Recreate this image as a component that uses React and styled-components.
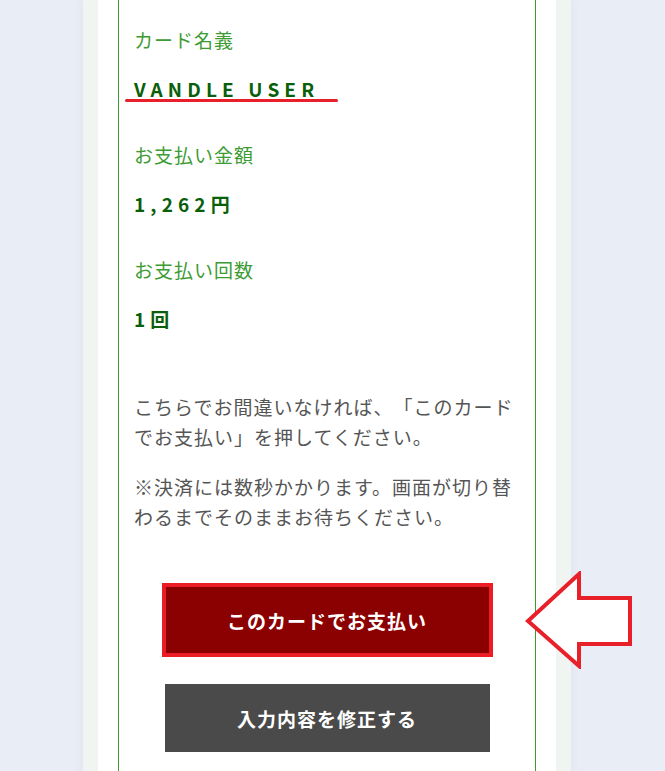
import styled, { createGlobalStyle } from 'styled-components';

const GlobalStyle = createGlobalStyle`
  html, body {
    margin: 0;
    padding: 0;
    background: #e9edf6;
    font-family: "Noto Sans CJK JP", "Noto Sans", sans-serif;
    text-spacing-trim: space-all;
  }
`;

const Page = styled.div`
  min-height: 100vh;
  padding-left: 83px;
`;

const Frame = styled.div`
  width: 458px;
  padding: 0 15px;
  background: #f1f5f1;
  box-shadow: 0 0 10px rgba(40, 50, 90, 0.06);
`;

const Sheet = styled.div`
  background: #fff;
  padding: 0 20px;
`;

const Confirm = styled.div`
  border-left: 1px solid #3a9a2e;
  border-right: 1px solid #3a9a2e;
  padding: 25px 15px 40px;
`;

const Label = styled.div`
  font-size: 19px;
  letter-spacing: 1px;
  line-height: 30px;
  color: #3d9b33;
  margin-top: ${(p) => (p.first ? '0' : '36px')};
`;

const Value = styled.div`
  position: relative;
  display: inline-block;
  margin-top: 19px;
  font-size: 19px;
  font-weight: 700;
  line-height: 30px;
  letter-spacing: 0.27em;
  color: #0a5f0a;
`;

// 赤線の注釈
const Mark = styled.span`
  position: absolute;
  left: -9px;
  top: 25px;
  width: 213px;
  height: 3px;
  border-radius: 2px;
  background: #e8202a;
`;

const Note = styled.p`
  margin: ${(p) => (p.first ? '58px' : '20px')} 0 0;
  font-size: 19px;
  letter-spacing: 1px;
  line-height: 30px;
  color: #555;
`;

const Actions = styled.div`
  display: flex;
  flex-direction: column;
  align-items: center;
  gap: 30px;
  margin-top: 54px;
`;

const ButtonWrap = styled.div`
  position: relative;
`;

const Button = styled.button`
  display: block;
  width: 325px;
  height: 68px;
  border: 0;
  padding: 0;
  font-family: inherit;
  font-size: 19px;
  font-weight: 700;
  letter-spacing: 1px;
  color: #fff;
  background: ${(p) => (p.primary ? '#8b0000' : '#4a4a4a')};
  outline: ${(p) => (p.primary ? '4px solid #ec1c24' : 'none')};
  outline-offset: -1px;
  cursor: pointer;
`;

const Arrow = styled.svg`
  position: absolute;
  left: calc(100% + 35px);
  top: -15px;
`;

function App () {
  return (
    <>
      <GlobalStyle />
      <Page>
        <Frame>
          <Sheet>
            <Confirm>
              <Label first>カード名義</Label>
              <div>
                <Value>
                  VANDLE USER
                  <Mark />
                </Value>
              </div>
              <Label>お支払い金額</Label>
              <Value>1,262円</Value>
              <Label>お支払い回数</Label>
              <Value>1回</Value>

              <Note first>
                こちらでお間違いなければ、「このカードでお支払い」を押してください。
              </Note>
              <Note>
                ※決済には数秒かかります。画面が切り替わるまでそのままお待ちください。
              </Note>

              <Actions>
                <ButtonWrap>
                  <Button primary>このカードでお支払い</Button>
                  {/* 注釈の矢印 */}
                  <Arrow width='108' height='98' viewBox='0 0 108 98'>
                    <polygon
                      points='3,50 54,3 54,27 105,27 105,73 54,73 54,95'
                      fill='#fff'
                      stroke='#e8202a'
                      strokeWidth='4'
                    />
                  </Arrow>
                </ButtonWrap>
                <Button>入力内容を修正する</Button>
              </Actions>
            </Confirm>
          </Sheet>
        </Frame>
      </Page>
    </>
  );
}

export default App;
